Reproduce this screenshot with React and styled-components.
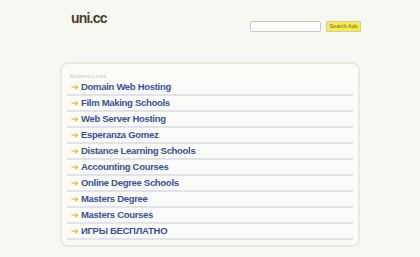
import React from "react";
import styled, { createGlobalStyle } from "styled-components";

const GlobalStyle = createGlobalStyle`
  html, body {
    margin: 0;
    padding: 0;
    background: #f7f7f1;
  }
  body {
    font-family: "Liberation Sans", Arial, sans-serif;
  }
`;

const Page = styled.div`
  width: 300px;
  margin: 0 auto;
  padding-top: 10px;
`;

const Header = styled.div`
  display: flex;
  justify-content: space-between;
  align-items: flex-start;
  height: 52px;
`;

const Logo = styled.div`
  margin-left: 11px;
  font-size: 14px;
  font-weight: bold;
  color: #4b3c26;
  letter-spacing: -0.8px;
`;

const SearchForm = styled.form`
  display: flex;
  gap: 5px;
  margin-top: 11px;
  margin-right: -1px;
`;

const SearchInput = styled.input`
  box-sizing: border-box;
  width: 71px;
  height: 11px;
  padding: 0;
  border: 1px solid #c9c9c3;
  border-radius: 2px;
  background: #fff;
`;

const SearchButton = styled.button`
  box-sizing: border-box;
  width: 35px;
  height: 11px;
  padding: 0;
  border: 1px solid #d0cda0;
  border-radius: 1px;
  background: #f6ec48;
  color: #6a6640;
  font-family: "Liberation Sans", Arial, sans-serif;
  font-size: 5.5px;
  line-height: 9px;
`;

const Card = styled.div`
  box-sizing: border-box;
  width: 300px;
  height: 185px;
  padding: 8px 5px 0 5px;
  background: #fbfbf7;
  border: 2px solid #e7ebd8;
  border-radius: 8px;
`;

const Caption = styled.div`
  margin-left: 3px;
  font-size: 6px;
  color: #cdcdc6;
  line-height: 8px;
`;

const LinkList = styled.ul`
  list-style: none;
  margin: 0;
  padding: 0;
`;

const LinkRow = styled.li`
  display: flex;
  align-items: center;
  height: 14px;
  border-bottom: 2px solid #dfe3ec;
`;

const Arrow = styled.span`
  width: 10px;
  margin-left: 4px;
  color: #f2c21c;
  font-family: "DejaVu Sans", sans-serif;
  font-size: 9.5px;
  font-weight: bold;
  line-height: 14px;
`;

const LinkText = styled.a`
  color: #35529c;
  font-size: 9.5px;
  font-weight: bold;
  letter-spacing: -0.3px;
  text-decoration: none;
  line-height: 14px;
`;

const links = [
  "Domain Web Hosting",
  "Film Making Schools",
  "Web Server Hosting",
  "Esperanza Gomez",
  "Distance Learning Schools",
  "Accounting Courses",
  "Online Degree Schools",
  "Masters Degree",
  "Masters Courses",
  "ИГРЫ БЕСПЛАТНО",
];

export default function App() {
  return (
    <>
      <GlobalStyle />
      <Page>
        <Header>
          <Logo>uni.cc</Logo>
          <SearchForm onSubmit={(e) => e.preventDefault()}>
            <SearchInput type="text" />
            <SearchButton type="submit">Search Ads</SearchButton>
          </SearchForm>
        </Header>
        <Card>
          <Caption>Related Links</Caption>
          <LinkList>
            {links.map((l) => (
              <LinkRow key={l}>
                <Arrow>➜</Arrow>
                <LinkText href="#">{l}</LinkText>
              </LinkRow>
            ))}
          </LinkList>
        </Card>
      </Page>
    </>
  );
}
